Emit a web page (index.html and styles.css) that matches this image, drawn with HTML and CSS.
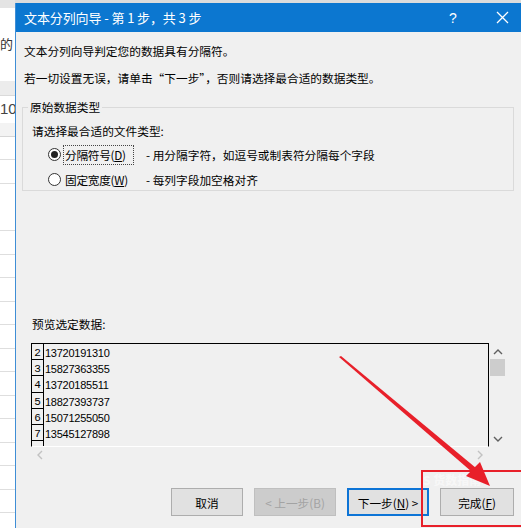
FILE: index.html
```html
<!DOCTYPE html>
<html lang="zh-CN">
<head>
<meta charset="utf-8">
<title>文本分列向导</title>
<link rel="stylesheet" href="styles.css">
</head>
<body>
<div class="screen">
  <div class="sheet">
    <div class="sheet-ribbon"></div>
    <div class="sheet-text">的</div>
    <div class="sheet-band"></div>
    <div class="sheet-num">10</div>
    <div class="sheet-band2"></div>
    <div class="sheet-grid"></div>
  </div>
  <div class="dialog">
    <div class="titlebar">
      <span class="title">文本分列向导 - 第 1 步，共 3 步</span>
      <span class="tb-help">?</span>
      <span class="tb-close"><svg width="13" height="13" viewBox="0 0 13 13"><path d="M1 1 L12 12 M12 1 L1 12" stroke="#fff" stroke-width="1.3" fill="none"/></svg></span>
    </div>
    <div class="body">
      <p class="line line1">文本分列向导判定您的数据具有分隔符。</p>
      <p class="line line2">若一切设置无误，请单击“下一步”，否则请选择最合适的数据类型。</p>
      <fieldset class="group">
        <legend class="legend">原始数据类型</legend>
        <div class="choose">请选择最合适的文件类型:</div>
        <div class="radio-row first-row">
          <span class="radio checked"></span>
          <span class="radio-label focus">分隔符号(<u>D</u>)</span>
          <span class="radio-desc">- 用分隔字符，如逗号或制表符分隔每个字段</span>
        </div>
        <div class="radio-row">
          <span class="radio"></span>
          <span class="radio-label">固定宽度(<u>W</u>)</span>
          <span class="radio-desc">- 每列字段加空格对齐</span>
        </div>
      </fieldset>
      <div class="preview-label">预览选定数据:</div>
      <div class="preview">
        <div class="preview-main">
          <div class="preview-box">
            <div class="prow"><span class="pnum">2</span><span class="pval">13720191310</span></div>
            <div class="prow"><span class="pnum">3</span><span class="pval">15827363355</span></div>
            <div class="prow"><span class="pnum">4</span><span class="pval">13720185511</span></div>
            <div class="prow"><span class="pnum">5</span><span class="pval">18827393737</span></div>
            <div class="prow"><span class="pnum">6</span><span class="pval">15071255050</span></div>
            <div class="prow"><span class="pnum">7</span><span class="pval">13545127898</span></div>
            <div class="prow"><span class="pnum"></span><span class="pval"></span></div>
          </div>
          <div class="hscroll">
            <svg width="8" height="10" viewBox="0 0 8 10"><path d="M6 1 L2 5 L6 9" stroke="#c2c2c2" stroke-width="1.4" fill="none"/></svg>
            <svg width="8" height="10" viewBox="0 0 8 10"><path d="M2 1 L6 5 L2 9" stroke="#c2c2c2" stroke-width="1.4" fill="none"/></svg>
          </div>
        </div>
        <div class="vscroll">
          <svg class="varrow" width="10" height="8" viewBox="0 0 10 8"><path d="M1 6 L5 2 L9 6" stroke="#606060" stroke-width="1.4" fill="none"/></svg>
          <div class="vthumb"></div>
          <div class="vspace"></div>
          <svg class="varrow" width="10" height="8" viewBox="0 0 10 8"><path d="M1 2 L5 6 L9 2" stroke="#606060" stroke-width="1.4" fill="none"/></svg>
        </div>
      </div>
      <div class="buttons">
        <button class="btn btn-cancel">取消</button>
        <button class="btn btn-prev" disabled>&lt; 上一步(B)</button>
        <button class="btn btn-next">下一步(<u>N</u>) &gt;</button>
        <button class="btn btn-finish">完成(<u>F</u>)</button>
      </div>
    </div>
  </div>
  <div class="watermark">S 货数指南</div>
  <svg class="annotation" width="521" height="528" viewBox="0 0 521 528">
    <polygon points="339,357 341,356 476,468 472,472" fill="#e8202a"/>
    <polygon points="466,476 490,486 480,462" fill="#e8202a"/>
    <rect x="422" y="471" width="104" height="55" fill="none" stroke="#e8202a" stroke-width="2"/>
  </svg>
</div>
</body>
</html>
```
FILE: styles.css
```css
* { box-sizing: border-box; }
html, body { margin: 0; padding: 0; }
body {
  width: 521px;
  height: 528px;
  overflow: hidden;
  background: #fff;
  font-family: "Noto Sans CJK SC", "Microsoft YaHei", sans-serif;
  font-size: 11.7px;
  color: #000;
}
.screen {
  position: relative;
  width: 521px;
  height: 528px;
  display: flex;
  background: linear-gradient(#dcdcdc, #dcdcdc) top / 100% 3px no-repeat, #fff;
}
.sheet {
  width: 15px;
  flex: none;
  display: flex;
  flex-direction: column;
  overflow: hidden;
  background: #fff;
}
.sheet-ribbon { height: 8px; background: #e4e4e4; }
.sheet-text { margin-top: 27px; height: 18px; font-size: 13px; line-height: 18px; color: #333; white-space: nowrap; }
.sheet-band { margin-top: 28px; height: 14px; background: #ececec; }
.sheet-num { height: 28px; line-height: 26px; font-family: "Liberation Sans", sans-serif; font-size: 15px; color: #444; border-top: 1px solid #dadada; white-space: nowrap; }
.sheet-band2 { height: 14px; background: #f3f3f3; border-bottom: 1px solid #d6d6d6; }
.sheet-grid {
  flex: 1;
  background: repeating-linear-gradient(to bottom, #fff 0, #fff 22.5px, #dedede 22.5px, #dedede 23.5px);
}
.dialog {
  flex: 1;
  margin-top: 3px;
  display: flex;
  flex-direction: column;
  background: #f0f0f0;
  border-left: 1px solid #3f8ed6;
}
.titlebar {
  height: 29px;
  flex: none;
  background: #0c77d0;
  color: #fff;
  display: flex;
  align-items: center;
  padding-left: 8px;
}
.title { font-size: 13px; flex: 1; letter-spacing: -0.1px; }
.tb-help { font-family: "Liberation Sans", sans-serif; font-size: 14px; width: 14px; margin-right: 36px; text-align: center; }
.tb-close { width: 14px; margin-right: 11px; display: flex; }
.body {
  flex: 1;
  display: flex;
  flex-direction: column;
  padding: 0 7px 0 7px;
}
.line { margin: 0; padding-left: 1px; line-height: 16px; }
.line1 { margin-top: 11px; }
.line2 { margin-top: 11px; }
.group {
  margin: 14px 0 0 -1px;
  width: 492px;
  height: 91px;
  border: 1px solid #dadada;
  border-radius: 0;
  padding: 0 0 0 9px;
  min-width: 0;
}
.legend { padding: 0 2px; margin-left: -4px; line-height: 14px; }
.choose { margin-top: 9px; line-height: 16px; }
.radio-row { display: flex; align-items: center; height: 25px; white-space: nowrap; }
.first-row { margin-top: 3px; }
.radio {
  width: 13px; height: 13px; border-radius: 50%;
  border: 1px solid #333; background: #fff;
  margin-left: 16px; margin-right: 2px;
  display: flex; align-items: center; justify-content: center;
  flex: none;
}
.radio.checked::after { content: ""; width: 7px; height: 7px; border-radius: 50%; background: #222; }
.radio-label { padding: 1px 1px; border: 1px dotted transparent; line-height: 16px; width: 71px; flex: none; letter-spacing: -0.3px; }
.radio-label.focus { border-color: #444; }
.radio-desc { margin-left: 12px; }
.preview-label { margin-top: 125px; padding-left: 9px; line-height: 16px; }
.preview {
  margin-top: 11px;
  margin-left: 8px;
  display: flex;
  width: 475px;
}
.preview-main { width: 459px; display: flex; flex-direction: column; }
.preview-box {
  height: 104px;
  border: 1px solid #000;
  border-bottom-color: #fff;
  overflow: hidden;
  font-family: "Liberation Sans", sans-serif;
  font-size: 11px;
}
.prow { display: flex; height: 16.2px; }
.pnum {
  width: 12px;
  border-right: 1px solid #000;
  border-bottom: 1px solid #000;
  font-family: "Liberation Mono", monospace;
  font-size: 11px;
  line-height: 18px;
  text-align: center;
  flex: none;
}
.pval { padding-left: 1px; line-height: 16px; letter-spacing: -0.25px; padding-top: 1px; }
.hscroll {
  height: 16px;
  display: flex;
  justify-content: space-between;
  align-items: center;
  padding: 0 5px 0 5px;
}
.vscroll { width: 17px; height: 104px; display: flex; flex-direction: column; align-items: center; }
.varrow { margin-top: 5px; flex: none; }
.vthumb { width: 15px; height: 17px; background: #cdcdcd; margin-top: 3px; }
.vspace { flex: 1; }
.vscroll .varrow:last-child { margin-top: 0; margin-bottom: 4px; }
.buttons {
  margin-top: 25px;
  display: flex;
  padding-left: 148px;
  gap: 11px;
}
.btn {
  height: 28px;
  font-family: "Noto Sans CJK SC", sans-serif;
  font-size: 11.7px;
  background: #e1e1e1;
  border: 1px solid #adadad;
  color: #000;
  padding: 0;
  border-radius: 0;
  white-space: nowrap;
}
.btn-cancel { width: 72px; }
.btn-prev { width: 82px; color: #a3a3a3; background: #cccccc; border-color: #bfbfbf; }
.btn-next { width: 82px; border: 2px solid #0d74d6; }
.btn-finish { width: 74px; }
.watermark {
  position: absolute;
  left: 423px;
  top: 471px;
  color: rgba(255,255,255,0.55);
  font-size: 12px;
  font-weight: bold;
}
.annotation { position: absolute; left: 0; top: 0; pointer-events: none; }
```
